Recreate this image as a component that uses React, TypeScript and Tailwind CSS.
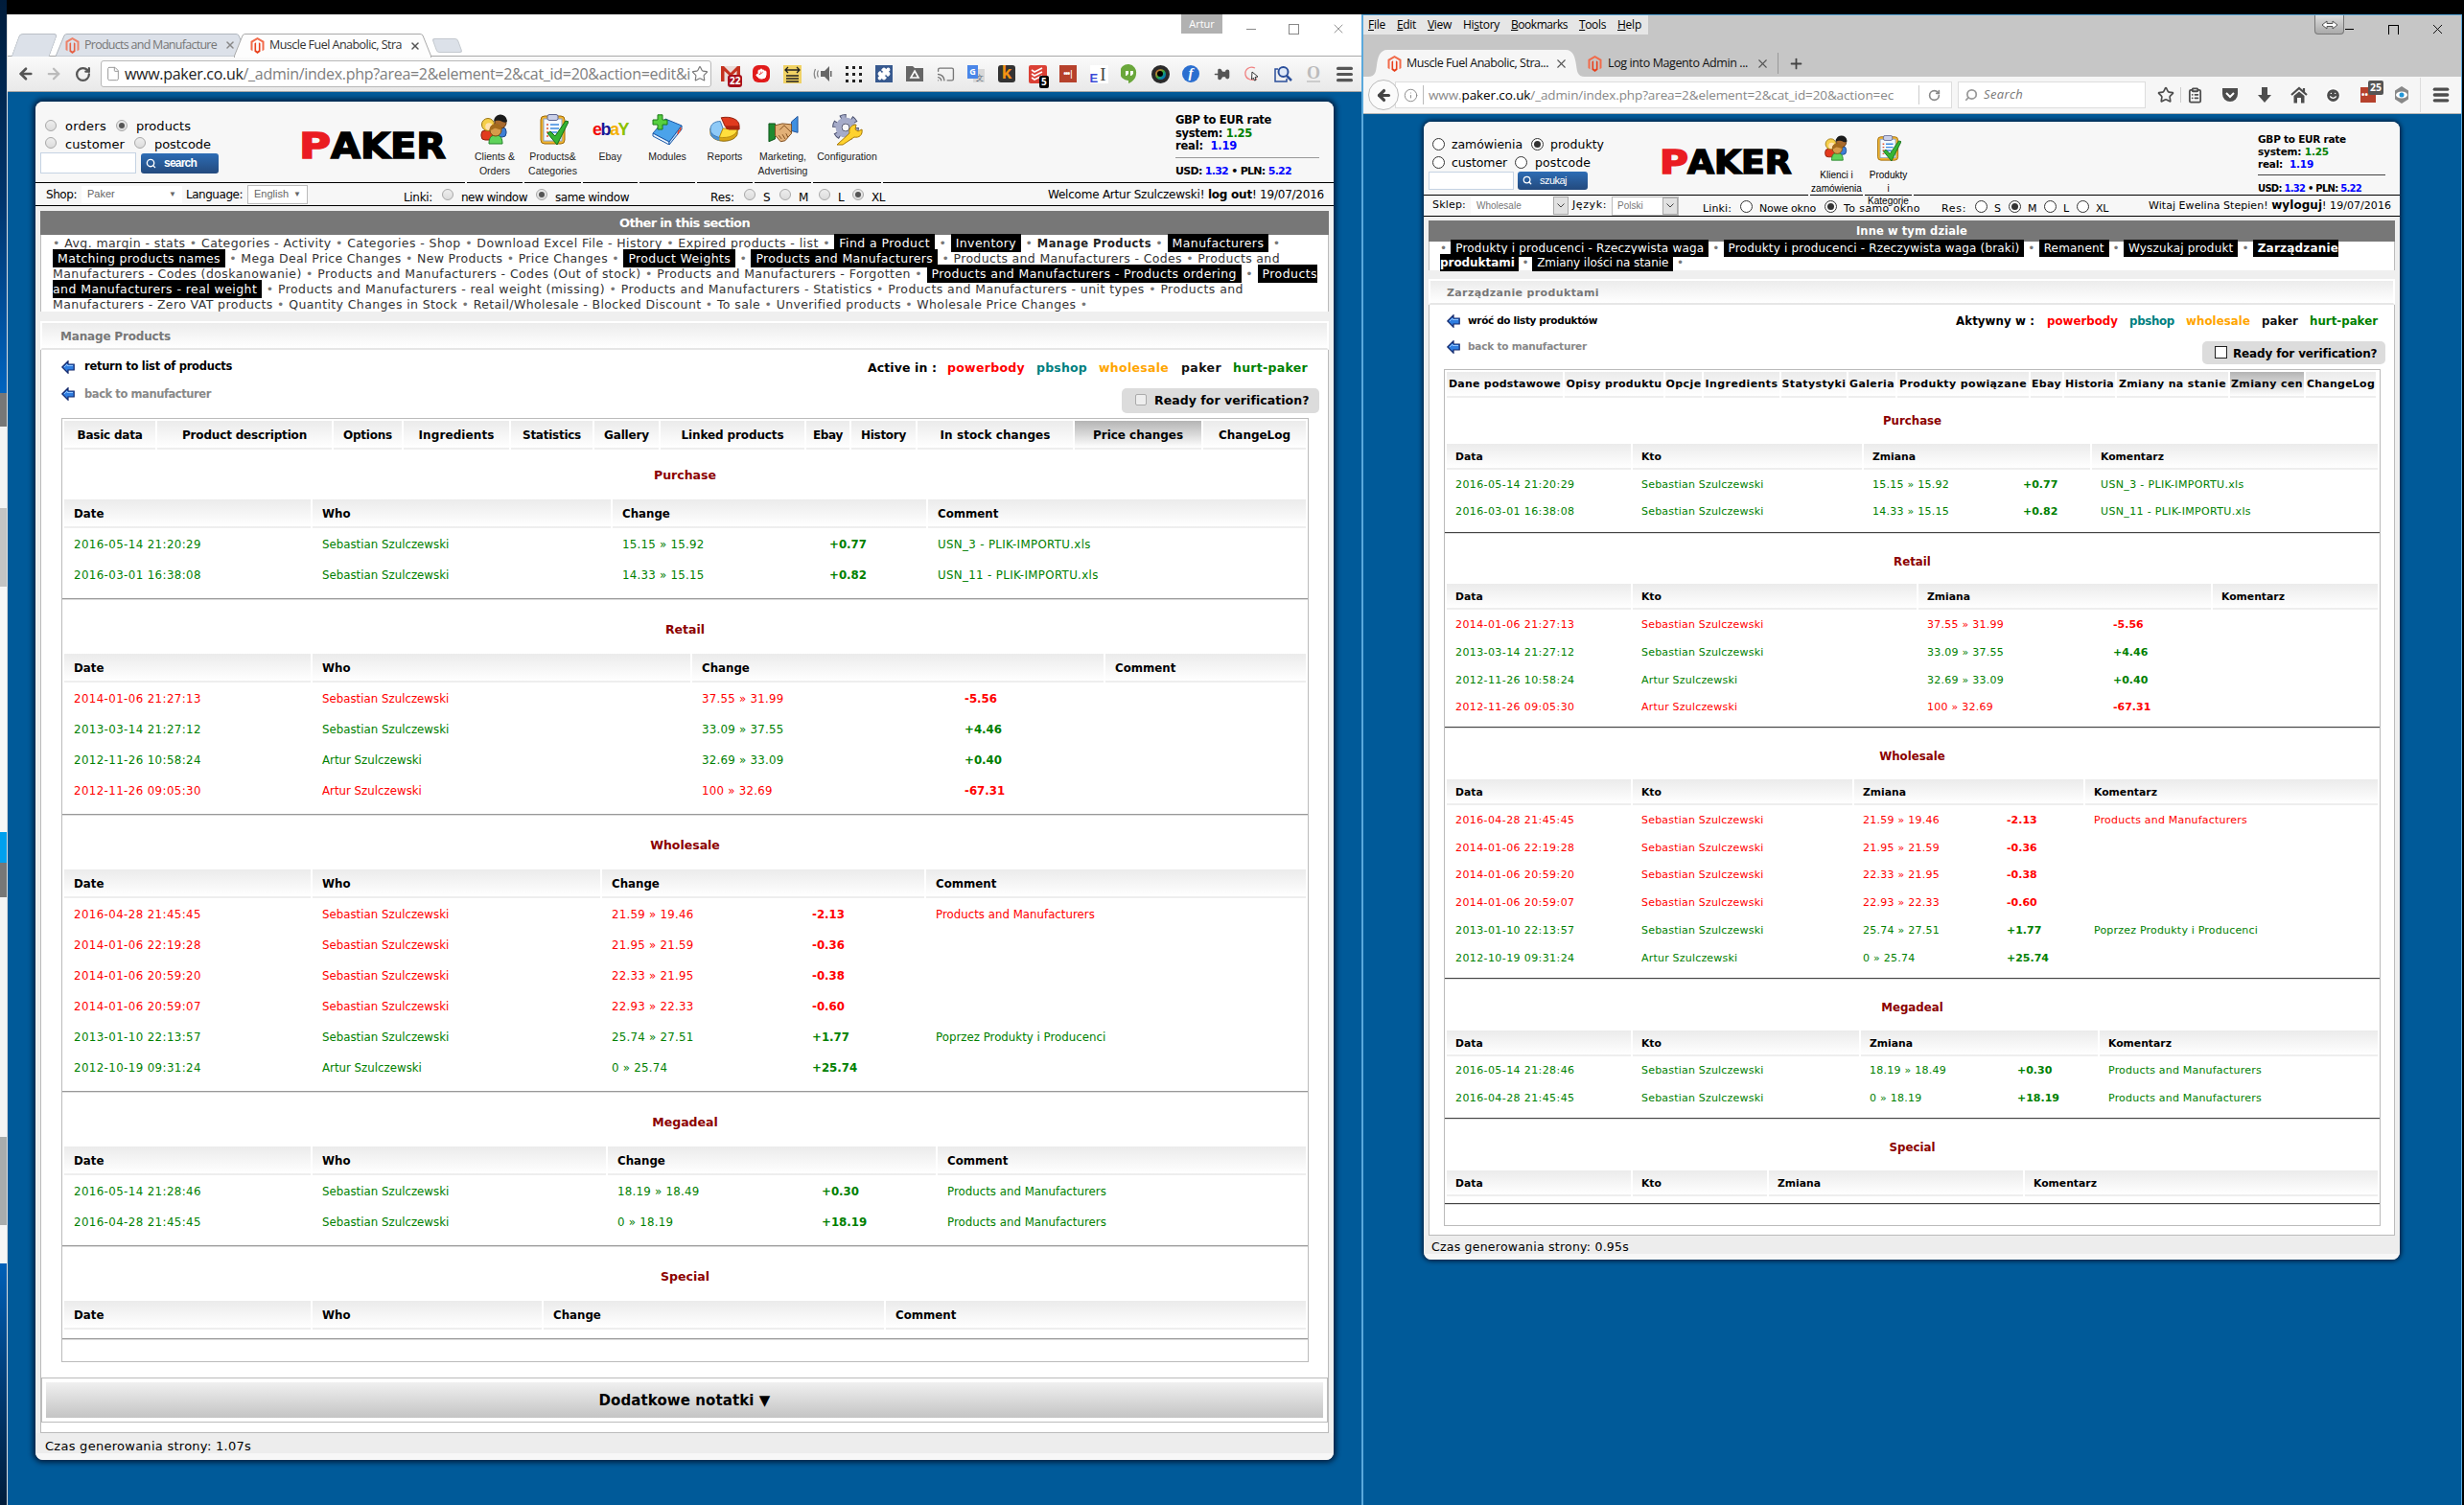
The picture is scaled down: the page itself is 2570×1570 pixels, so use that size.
import React, { useLayoutEffect, useRef } from "react";
import { Star, ArrowLeft, ArrowRight, RotateCw, X, Cast, Pin, Menu, ClipboardList, Home, Smile, Search, Puzzle, Hand, Plus, Info, ArrowDown, File } from "lucide-react";

type Kids = { className?: string; children?: React.ReactNode };

/* Text run spread evenly over the width of its box. */
function T({ className = "", children }: Kids) {
  const ref = useRef<HTMLSpanElement>(null);
  useLayoutEffect(() => {
    const el = ref.current;
    if (!el || !el.parentElement) return;
    el.style.letterSpacing = "0px";
    const target = el.parentElement.clientWidth;
    const natural = el.getBoundingClientRect().width;
    el.style.letterSpacing = (target - natural) / (el.textContent || " ").length + "px";
  });
  return (
    <span className={"inline-block shrink-0 whitespace-nowrap " + className}>
      <span ref={ref} className="inline-block">{children}</span>
    </span>
  );
}

/* ---------- small drawings ---------- */

function Magento({ className = "" }: { className?: string }) {
  return (
    <svg viewBox="0 0 14 17" className={"h-[17px] w-[15px] shrink-0 " + className}>
      <path d="M7 0 14 4v9l-2 1.2V5.2L7 2.3 2 5.2v9L0 13V4Z" fill="#f26b4a" />
      <path d="M4 6.2 5.6 5.3v8.2l1.4.9 1.4-.9V5.3L10 6.2v8.6L7 17l-3-2.2Z" fill="#e8401c" />
    </svg>
  );
}

function BlueArrow({ className = "" }: { className?: string }) {
  return (
    <svg viewBox="0 0 14 14" className={"h-[14px] w-[14px] shrink-0 " + className}>
      <path d="M.8 7 7 .8V4h6.2v6H7v3.2Z" fill="#2f7de0" stroke="#12276b" strokeWidth="1.2" />
      <path d="M3 7 6 4v1.5h6" fill="none" stroke="#8fc4ff" />
    </svg>
  );
}

function People() {
  return (
    <svg viewBox="0 0 32 32" className="h-full w-full">
      <rect x="2" y="17" width="12" height="10" rx="4" fill="#e23a1d" stroke="#8a1c0a" />
      <rect x="19" y="14" width="9" height="10" rx="4" fill="#3d7fd6" stroke="#1d4688" />
      <circle cx="9" cy="11" r="6.5" fill="#f5cf4a" stroke="#9a7410" />
      <circle cx="10" cy="13" r="3.8" fill="#ffe2b0" />
      <circle cx="22" cy="9" r="6" fill="#a96a2e" stroke="#5a340f" />
      <path d="M15 8a7 7 0 0 1 14-1c0 2-3 2-5 1s-6-2-9 0Z" fill="#1b1b1b" />
      <path d="M10 31c0-6 2-9 7-9s7 3 7 9Z" fill="#5fd35a" stroke="#23832a" />
      <circle cx="17" cy="17" r="6" fill="#d79b4a" stroke="#7c4c12" />
      <path d="M10.500 17a6.500 6.500 0 0 1 13-1c-3 1-6-2-8-1s-3 2-5 2Z" fill="#a46a1c" />
    </svg>
  );
}

function Clipboard() {
  return (
    <svg viewBox="0 0 32 32" className="h-full w-full">
      <rect x="3" y="2" width="25" height="29" rx="4" fill="#f2b42d" stroke="#9c6a0b" />
      <rect x="6" y="5" width="19" height="23" fill="#f4f9ff" stroke="#8aa2c8" />
      <rect x="10" y="0.500" width="11" height="6" rx="2" fill="#c9cfe8" stroke="#5c6490" />
      <path d="M13 11h9M13 15h9M13 19h7M13 23h5" stroke="#3d8be0" strokeWidth="1.700" />
      <path d="M9 11h2M9 15h2M9 19h2M9 23h2" stroke="#e2542d" strokeWidth="1.700" />
      <path d="m10 20 3-2 5 5L29 7l3 1-12 24Z" fill="#35b433" stroke="#136a17" />
    </svg>
  );
}

function EbayLogo() {
  return (
    <span className="flex h-full items-center justify-center font-['Liberation_Sans'] text-[18px] leading-none font-bold tracking-[-1.5px]">
      <span className="text-[#f20c0c]">e</span>
      <span className="text-[#1a1a9a]">b</span>
      <span className="text-[#f5b000]">a</span>
      <span className="text-[#8cc000]">Y</span>
    </span>
  );
}

function Book() {
  return (
    <svg viewBox="0 0 32 32" className="h-full w-full">
      <path d="m14 5 17 7-13 17L1 20Z" fill="#4ba3ea" stroke="#1c5aa8" />
      <path d="m1 20 17 9v3L1 23Z" fill="#e9f3ff" stroke="#1c5aa8" />
      <path d="m31 12v4L18 32v-3Z" fill="#bcd6f3" stroke="#1c5aa8" />
      <path d="m30 14-1 4M28 17l-1 4" stroke="#e4472a" strokeWidth="1.500" />
      <path d="M6 .8h5V6h5v5h-5v5H6v-5H1V6h5Z" fill="#56cf3f" stroke="#1d7b18" />
    </svg>
  );
}

function Pie() {
  return (
    <svg viewBox="0 0 34 28" className="h-[28px] w-[34px]">
      <path d="M1 13v5c0 5 7 9 15 9s15-4 15-9v-4Z" fill="#d8a513" stroke="#8c6a0d" />
      <path d="M1 13v5c0 4 4 7 10 8.500V18Z" fill="#4d92d4" />
      <path d="M15 13 11 23C4 21 1 18 1 14 1 8 6 5 12 5Z" fill="#8fcaf7" stroke="#3d79b5" />
      <path d="M15 13h16c0 6-7 10-15 10-2 0-4 0-5-.5Z" fill="#ffdf3d" stroke="#b58a10" />
      <path d="M17 10 13 1c11-2 20 2 20 9v4H21Z" fill="#e03a1e" stroke="#8e1d0a" />
      <path d="M17 10h16v4H19Z" fill="#a82410" />
    </svg>
  );
}

function Hands() {
  return (
    <svg viewBox="0 0 34 30" className="h-[31px] w-[34px]">
      <path d="M1 8h7v17l-7 3Z" fill="#1f8a30" stroke="#0c521a" />
      <path d="M33 0v18l-7-2V6Z" fill="#3f8fe0" stroke="#1d4f97" />
      <path d="M8 10 16 8l10 1v10l-7 8-5 1-6-7Z" fill="#e2b077" stroke="#7d4b1c" />
      <path d="m13 15 5-5 8 8M12 21l3 4M16 20l3 5M20 19l2 4" fill="none" stroke="#7d4b1c" />
    </svg>
  );
}

function GearWrench() {
  return (
    <svg viewBox="0 0 32 34" className="h-[34px] w-[32px]">
      <circle cx="14" cy="15" r="9.500" fill="none" stroke="#4d5270" strokeWidth="9" strokeDasharray="5.200 4.750" />
      <circle cx="14" cy="15" r="9.500" fill="none" stroke="#a5abc9" strokeWidth="7" strokeDasharray="3.600 6.350" strokeDashoffset="-0.8" />
      <circle cx="14" cy="15" r="7.500" fill="none" stroke="#a5abc9" strokeWidth="6" />
      <circle cx="14" cy="15" r="4" fill="#f7f7f7" stroke="#4d5270" />
      <path d="m5 33 13-12c-1-5 2-9 7-9l-1 5 3 2 4-2c1 6-3 9-8 8L11 33Z" fill="#ffd22e" stroke="#a87a08" />
    </svg>
  );
}

function Logo({ className, p }: { className: string; p: string }) {
  return (
    <div className={"flex leading-none font-black " + className}>
      <span className={"shrink-0 " + p}>
        <span className="inline-block origin-left scale-x-[1.22] text-[#ea1c22] [-webkit-text-stroke:1.5px_#ea1c22]">P</span>
      </span>
      <span className="inline-block origin-left scale-x-[1.080] text-black [-webkit-text-stroke:1.5px_#000]">AKER</span>
    </div>
  );
}

function Radio({ on, ff, className = "" }: { on?: boolean; ff?: boolean; className?: string }) {
  return ff ? (
    <span className={"flex h-[13px] w-[13px] shrink-0 items-center justify-center rounded-full border border-[#333] bg-white " + className}>
      {on && <span className="h-[7px] w-[7px] rounded-full bg-[#333]" />}
    </span>
  ) : (
    <span className={"flex h-3 w-3 shrink-0 items-center justify-center rounded-full border border-[#a8a8a8] bg-linear-to-b from-[#eee] to-[#dcdcdc] " + className}>
      {on && <span className="h-[6px] w-[6px] rounded-full bg-[#555]" />}
    </span>
  );
}

/* ---------- link strip ---------- */

const linkStyles: Record<string, string> = {
  "*": "bg-black px-[5px] py-[2px] text-white",
  "<": "bg-black py-[2px] pl-[5px] text-white",
  ">": "bg-black py-[2px] pr-[5px] text-white",
  "{": "bg-black py-[2px] pl-[5px] font-bold text-white",
  "}": "bg-black py-[2px] pr-[4px] font-bold text-white",
  "!": "font-bold text-[11.5px] text-[#222]",
};

function Links({ lines, className }: { lines: { w: string; parts: string[]; tail?: boolean; head?: boolean }[]; className: string }) {
  return (
    <div className={className}>
      {lines.map((l, i) => (
        <div key={i} className="flex">
          <T className={l.w}>
            {l.head && <span className="text-[#777]">• </span>}
            {l.parts.map((p, j) => {
              const style = linkStyles[p[0]];
              return (
                <span key={j}>
                  <span className={style || "text-[#333]"}>{style ? p.slice(1) : p}</span>
                  {(j < l.parts.length - 1 || l.tail) && <span className="text-[#777]"> • </span>}
                </span>
              );
            })}
          </T>
        </div>
      ))}
    </div>
  );
}

/* ---------- price tables ---------- */

type Row = [string, string, string, string, string?];
type Sec = { title: string; grid: string; rows: Row[] };
type Style = {
  head: string; row: string; cell: string; name: string; firstTitle: string; title: string; gap: string; hr: string; labels: string[];
};

const S = "Sebastian Szulczewski";
const A = "Artur Szulczewski";
const PM = "Products and Manufacturers";

const data: { title: string; rows: Row[] }[] = [
  { title: "Purchase", rows: [
    ["2016-05-14 21:20:29", S, "15.15 » 15.92", "+0.77", "USN_3 - PLIK-IMPORTU.xls"],
    ["2016-03-01 16:38:08", S, "14.33 » 15.15", "+0.82", "USN_11 - PLIK-IMPORTU.xls"] ] },
  { title: "Retail", rows: [
    ["2014-01-06 21:27:13", S, "37.55 » 31.99", "-5.56"],
    ["2013-03-14 21:27:12", S, "33.09 » 37.55", "+4.46"],
    ["2012-11-26 10:58:24", A, "32.69 » 33.09", "+0.40"],
    ["2012-11-26 09:05:30", A, "100 » 32.69", "-67.31"] ] },
  { title: "Wholesale", rows: [
    ["2016-04-28 21:45:45", S, "21.59 » 19.46", "-2.13", PM],
    ["2014-01-06 22:19:28", S, "21.95 » 21.59", "-0.36"],
    ["2014-01-06 20:59:20", S, "22.33 » 21.95", "-0.38"],
    ["2014-01-06 20:59:07", S, "22.93 » 22.33", "-0.60"],
    ["2013-01-10 22:13:57", S, "25.74 » 27.51", "+1.77", "Poprzez Produkty i Producenci"],
    ["2012-10-19 09:31:24", A, "0 » 25.74", "+25.74"] ] },
  { title: "Megadeal", rows: [
    ["2016-05-14 21:28:46", S, "18.19 » 18.49", "+0.30", PM],
    ["2016-04-28 21:45:45", S, "0 » 18.19", "+18.19", PM] ] },
  { title: "Special", rows: [] },
];

function Tables({ grids, st }: { grids: string[]; st: Style }) {
  const secs: Sec[] = data.map((d, i) => ({ ...d, grid: grids[i] }));
  return (
    <>
      {secs.map((s, i) => (
        <section key={s.title}>
          <h3 className={"flex items-center justify-center font-bold text-[#8b0000] " + (i ? st.title : st.firstTitle)}>{s.title}</h3>
          <div className={"grid gap-x-[2px] px-[2px] " + s.grid}>
            {st.labels.map((l, j) => (
              <div key={l} className={"flex items-center border-b-2 border-[#eee] bg-linear-to-b from-[#ebebeb] to-white pt-[3px] font-bold text-black " + st.head + (j === 2 ? " col-span-2" : "")}>{l}</div>
            ))}
          </div>
          {s.rows.map((r) => (
            <div key={r[0]} className={"grid items-center gap-x-[2px] px-[2px] pt-[3px] " + s.grid + " " + st.row + (r[3][0] === "-" ? " text-[#f00]" : " text-[#008000]")}>
              <span className={st.cell + " tracking-[0.4px]"}>{r[0]}</span>
              <span className={st.cell + " " + st.name}>{r[1]}</span>
              <span className={st.cell + " tracking-[0.25px]"}>{r[2]}</span>
              <span className={st.cell + " font-bold"}>{r[3]}</span>
              <span className={st.cell + (i === 0 ? " tracking-[0.35px]" : " " + st.name)}>{r[4]}</span>
            </div>
          ))}
          <div className={st.gap} />
          <div className={"h-[2px] border-t border-b border-b-[#ddd] " + st.hr} />
        </section>
      ))}
    </>
  );
}

function Tabs({ items, className, active }: { items: [string, string, string][]; className: string; active: number }) {
  return (
    <div className={"flex gap-[2px] px-[2px] font-bold text-black " + className}>
      {items.map(([t, box, w], i) => (
        <div key={t} className={"flex shrink-0 items-center justify-center border-b-2 border-[#eee] bg-linear-to-b to-white pt-[2px] " + box + (i === active ? " from-[#b4b4b4]" : " from-[#ebebeb]")}>
          <T className={w}>{t}</T>
        </div>
      ))}
    </div>
  );
}

/* ---------- Chrome window ---------- */

function ExtIcons() {
  const cell = "relative flex h-9 w-8 shrink-0 items-center justify-center";
  return (
    <div className="flex">
      <div className={cell}>
        <svg viewBox="0 0 20 16" className="h-4 w-5"><path d="M0 0h20v16H0Z" fill="#e9dcd8" /><path d="M0 0h3l7 7 7-7h3v16h-3.500V5L10 11 3.500 5v11H0Z" fill="#c5321f" /></svg>
        <span className="absolute top-[19px] left-[13px] rounded-[3px] bg-[#a80f1b] px-[2px] text-[10px] leading-[13px] font-bold text-white">22</span>
      </div>
      <div className={cell}><span className="flex h-[18px] w-[18px] items-center justify-center rounded-[6px] bg-[#e11b1b]"><Hand className="h-3 w-3 fill-white text-white" /></span></div>
      <div className={cell}>
        <svg viewBox="0 0 19 19" className="h-[19px] w-[19px]"><path d="M0 0h19v19H0Z" fill="#f0d264" /><path d="m5 2-3 3 3 3M14 2l3 3-3 3M2 5h15M3 11h13M3 14h13M3 17h13" stroke="#222" strokeWidth="1.300" fill="none" /></svg>
      </div>
      <div className={cell}>
        <svg viewBox="0 0 20 18" className="h-[18px] w-5"><path d="M8 6h4l5-5v16l-5-5H8ZM18 6h1.500v6H18Z" fill="#666" /><path d="M5.500 5.500q-2 3.500 0 7M2.500 4q-2.500 5 0 10" fill="none" stroke="#888" strokeWidth="1.300" /></svg>
      </div>
      <div className={cell}>
        <div className="grid grid-cols-3 gap-[4px]">{Array.from({ length: 9 }, (_, i) => <span key={i} className="h-[3px] w-[3px] bg-[#222]" />)}</div>
      </div>
      <div className={cell}><span className="flex h-[18px] w-[18px] items-center justify-center bg-[#37598f]"><Puzzle className="h-3.5 w-3.5 fill-white text-white" /></span></div>
      <div className={cell}>
        <svg viewBox="0 0 20 16" className="h-4 w-5"><path d="M1 0h7l2 2h9v14H1Z" fill="#666" /><path d="m10 5 4 7H6Z" fill="none" stroke="#fff" strokeWidth="1.600" /></svg>
      </div>
      <div className={cell}><Cast className="h-[19px] w-[19px] text-[#777]" strokeWidth={1.700} /></div>
      <div className={cell}>
        <span className="relative flex h-[18px] w-[18px]">
          <span className="mt-1 ml-1.5 flex h-[14px] w-3 items-end justify-end bg-[#d8d8d8] pr-px text-[8px] leading-[10px] text-[#567]">文</span>
          <span className="absolute top-0 left-0 h-[14px] w-[11px] bg-[#4a86e8] text-center text-[9px] leading-[13px] font-bold text-white">G</span>
        </span>
      </div>
      <div className={cell}><span className="h-[18px] w-[18px] rounded-[3px] bg-[#333] text-center text-[17px] leading-[16px] font-bold text-[#f59312]">k</span></div>
      <div className={cell}>
        <svg viewBox="0 0 19 19" className="h-[19px] w-[19px]"><rect width="19" height="19" rx="2" fill="#db4035" /><path d="m3 5 3 2 8-4M3 9l3 2 8-4M3 13l3 2 8-4" stroke="#fff" strokeWidth="1.600" fill="none" /></svg>
        <span className="absolute top-[20px] left-[18px] rounded-[2px] bg-black px-[2px] text-[10px] leading-[13px] font-bold text-white">5</span>
      </div>
      <div className={cell}><span className="flex h-[18px] w-[18px] items-center justify-center bg-[#b6412c] text-[8px] font-bold tracking-[-1px] text-white">•••|</span></div>
      <div className={cell}><span className="flex h-[19px] w-[19px] items-end bg-white font-['Liberation_Sans'] text-[13px] leading-[11px] font-bold text-[#3b4ad6]">E<span className="pb-px pl-[2px] font-['Liberation_Serif'] text-[19px] leading-[17px] font-normal text-[#444]">I</span></span></div>
      <div className={cell}>
        <svg viewBox="0 0 18 20" className="h-5 w-[18px]"><path d="M8 17A8.500 8.500 0 1 1 16 10c0 4-3 8-8 10Z" fill="#6aa73b" /><path d="M5 7h3v3l-2 2H5ZM10 7h3v3l-2 2h-1Z" fill="#fff" /></svg>
      </div>
      <div className={cell}><span className="flex h-[19px] w-[19px] items-center justify-center rounded-full border-4 border-[#2a2a2a] bg-linear-to-br from-[#e33] via-[#3a3] to-[#33e]"><span className="h-1.5 w-1.5 rounded-full bg-black" /></span></div>
      <div className={cell}><span className="h-[18px] w-[18px] rounded-full bg-[#2b6fd0] text-center font-['Liberation_Serif'] text-[15px] leading-[17px] font-bold text-white italic">f</span></div>
      <div className={cell}><Pin className="h-[17px] w-[17px] rotate-90 fill-[#555] text-[#555]" /></div>
      <div className={cell}>
        <svg viewBox="0 0 18 18" className="h-[18px] w-[18px]"><path d="M12 3C6 0 1 5 2 10s8 7 12 4" fill="none" stroke="#f08080" strokeWidth="1.300" /><path d="m9 7 6 5-3 .5 1 3-1.500.500-1.200-2.800L8.500 15Z" fill="#fff" stroke="#333" /></svg>
      </div>
      <div className={cell}>
        <svg viewBox="0 0 19 19" className="h-[19px] w-[19px]"><path d="M4 4H1v13h12v-3" fill="none" stroke="#2b4f9b" strokeWidth="1.500" /><circle cx="9.500" cy="7" r="5" fill="#dfe9f8" stroke="#2b4f9b" strokeWidth="2" /><path d="m13 11 5 5" stroke="#2b4f9b" strokeWidth="2.500" /></svg>
      </div>
      <div className={cell}><span className="border-b-2 border-[#ccc] font-['Liberation_Serif'] text-[18px] leading-[16px] font-bold text-[#bbb]">O</span></div>
      <div className={cell}><Menu className="h-[21px] w-[21px] text-[#555]" strokeWidth={3.500} /></div>
    </div>
  );
}

function ChromeTop() {
  return (
    <>
      <div className="flex h-[44px] border-b border-[#a9a9a9] bg-white font-['Open_Sans'] text-[12.5px]">
        <div className="mt-[20px] flex h-[24px] w-[52px] items-center pl-[8px]">
          <span className="h-full w-[40px] skew-x-[-20deg] rounded-t-[4px] border border-b-0 border-[#b9bfc6] bg-[#dce1e9]" />
        </div>
        <div className="relative mt-[20px] flex h-[24px] w-[190px] items-center text-[#777]">
          <svg viewBox="0 0 200 24" className="absolute top-0 left-[-2px] h-[24px] w-[200px]"><path d="M0 24 9 2q1-1.500 3-1.500h176q2 0 3 1.500l9 22Z" fill="#dce1e9" stroke="#b0b6bd" /></svg>
          <Magento className="relative ml-[8px] opacity-80" />
          <T className="relative ml-[5px] w-[138px]">Products and Manufacture</T>
          <X className="relative ml-[8px] h-3 w-3 text-[#888]" strokeWidth={3} />
        </div>
        <div className="relative mt-[20px] flex h-[25px] w-[192px] items-center text-[#333]">
          <svg viewBox="0 0 206 25" className="absolute top-0 left-[-6px] h-[25px] w-[206px]"><path d="M0 24.500 9 2q1-1.500 3-1.500h182q2 0 3 1.500l9 22.500Z" fill="#fdfdfd" stroke="#a9a9a9" /><path d="M1 24.500h204" stroke="#fdfdfd" /></svg>
          <Magento className="relative ml-[11px]" />
          <T className="relative ml-[5px] w-[138px]">Muscle Fuel Anabolic, Stra</T>
          <X className="relative ml-[8px] h-3 w-3 text-[#555]" strokeWidth={3} />
        </div>
        <span className="mt-[25px] ml-[11px] h-[15px] w-[27px] skew-x-[20deg] rounded-[3px] border border-[#c4c9cf] bg-[#dce1e9]" />
        <span className="ml-auto flex h-[20px] w-[43px] items-center justify-center bg-[#b1b1b1] text-[11px] text-white">Artur</span>
        <span className="mt-[15px] ml-[25px] h-px w-[10px] bg-[#888]" />
        <span className="mt-[10px] ml-[34px] h-[11px] w-[11px] border border-[#888]" />
        <X className="mt-[7px] mr-[16px] ml-[33px] h-4 w-4 text-[#888]" strokeWidth={1.300} />
      </div>
      <div className="flex h-[37px] items-center border-b border-[#a5a5a5] bg-linear-to-b from-[#fafafa] to-[#e9e9e9]">
        <ArrowLeft className="ml-[10px] h-[18px] w-[18px] text-[#555]" strokeWidth={3.500} />
        <ArrowRight className="ml-[11px] h-[18px] w-[18px] text-[#bbb]" strokeWidth={3} />
        <RotateCw className="ml-[13px] h-[17px] w-[17px] text-[#555]" strokeWidth={3.200} />
        <div className="ml-[10px] flex h-[28px] w-[637px] items-center rounded-[3px] border border-[#b8b8b8] bg-white">
          <File className="ml-[4px] h-[16px] w-[16px] text-[#999]" strokeWidth={1.500} />
          <T className="ml-[4px] w-[590px] font-['Open_Sans'] text-[16px] text-[#7e7e7e]"><span className="text-[#222]">www.paker.co.uk</span>/_admin/index.php?area=2&amp;element=2&amp;cat_id=20&amp;action=edit&amp;i</T>
          <Star className="ml-px h-[18px] w-[18px] text-[#777]" strokeWidth={1.500} />
        </div>
        <div className="ml-[4px]"><ExtIcons /></div>
      </div>
    </>
  );
}

const menuLeft: [string, string, React.ReactNode, string][] = [
  ["Clients &", "Orders", <People />, "w-[58px]"],
  ["Products&", "Categories", <Clipboard />, "w-[59px]"],
  ["Ebay", "", <EbayLogo />, "w-[57px]"],
  ["Modules", "", <Book />, "w-[58px]"],
  ["Reports", "", <Pie />, "w-[58px]"],
  ["Marketing,", "Advertising", <Hands />, "w-[59px]"],
  ["Configuration", "", <GearWrench />, "w-[71px]"],
];

function LeftPage() {
  return (
    <div className="flex-1 bg-[#005a99] pt-[10px] pl-[29px] font-['DejaVu_Sans'] text-[12px] text-black">
      <div className="flex h-[1417px] w-[1354px] flex-col overflow-hidden rounded-[8px] bg-[#efefef] shadow-[0_0_5px_3px_rgba(0,20,45,0.75)]">
        <header className="flex h-[85px] shrink-0 gap-[2px] bg-[#f7f7f7]">
          <div className="flex w-[448px] border-b border-black">
            <div className="w-[275px] pt-[16px] text-[13px]">
              <div className="flex h-[20px] items-center">
                <Radio className="mb-[3px] ml-[10px]" /><T className="ml-[9px] w-[43px]">orders</T>
                <Radio on className="mb-[3px] ml-[10px]" /><T className="ml-[9px] w-[57px]">products</T>
              </div>
              <div className="flex h-[17px] items-center">
                <Radio className="mb-[3px] ml-[10px]" /><T className="ml-[9px] w-[62px]">customer</T>
                <Radio className="mb-[3px] ml-[10px]" /><T className="ml-[9px] w-[59px]">postcode</T>
              </div>
              <div className="flex h-[22px] items-center pl-[5px]">
                <span className="h-[22px] w-[100px] border border-[#c5d3e3] bg-white" />
                <span className="ml-[5px] flex h-[21px] w-[81px] items-center rounded-[3px] bg-linear-to-b from-[#2d6db5] to-[#234a7e] text-white">
                  <Search className="ml-[5px] h-[11px] w-[11px]" strokeWidth={3} />
                  <T className="ml-[8px] w-[34px] font-['Liberation_Sans'] text-[12px] font-bold">search</T>
                </span>
              </div>
            </div>
            <Logo className="pt-[28px] text-[37px]" p="w-[33px]" />
          </div>
          {menuLeft.map(([a, b, icon, w]) => (
            <div key={a} className={"flex flex-col items-center border-b border-black pt-[13px] font-['Liberation_Sans'] text-[10.5px] leading-[15px] whitespace-nowrap text-[#222] " + w}>
              <div className="mb-[5px] flex h-[32px] w-[32px] items-center justify-center">{icon}</div>
              <span>{a}</span>
              <span>{b}</span>
            </div>
          ))}
          <div className="flex flex-1 justify-end border-b border-black pt-[13px] pr-[15px] text-[11.5px] leading-[13.5px] font-bold">
            <div className="w-[150px]">
              <div><T className="w-[100px]">GBP to EUR rate</T></div>
              <div><T className="w-[80px]">system: <span className="text-[#008000]">1.25</span></T></div>
              <div><T className="w-[64px]">real: &nbsp;<span className="text-[#00f]">1.19</span></T></div>
              <div className="mt-[4px] h-[2px] border-t border-[#999]" />
              <div className="mt-[6px] text-[11px]"><T className="w-[121px]">USD: <span className="text-[#00f]">1.32</span> • PLN: <span className="text-[#00f]">5.22</span></T></div>
            </div>
          </div>
        </header>
        <div className="flex h-[24px] shrink-0 items-center border-b border-black bg-[#f7f7f7] text-[12px]">
          <T className="ml-[11px] w-[32px]">Shop:</T>
          <span className="ml-[5px] flex h-[18px] w-[105px] items-center justify-between bg-white px-[6px] font-['Liberation_Sans'] text-[11px] text-[#666]">Paker<span className="text-[8px]">▼</span></span>
          <T className="ml-[4px] w-[59px]">Language:</T>
          <span className="ml-[5px] flex h-[20px] w-[63px] items-center justify-between border border-[#bbb] bg-white px-[6px] font-['Liberation_Sans'] text-[11px] text-[#666]">English<span className="text-[8px]">▼</span></span>
          <div className="flex items-center pt-[6px]">
            <T className="ml-[100px] w-[30px]">Linki:</T>
            <Radio className="mb-[6px] ml-[10px]" /><T className="ml-[8px] w-[69px]">new window</T>
            <Radio on className="mb-[6px] ml-[9px]" /><T className="ml-[8px] w-[77px]">same window</T>
            <T className="ml-[85px] w-[25px]">Res:</T>
            <Radio className="mb-[6px] ml-[10px]" /><T className="ml-[8px] w-[7px]">S</T>
            <Radio className="mb-[6px] ml-[10px]" /><T className="ml-[8px] w-[9px]">M</T>
            <Radio className="mb-[6px] ml-[12px]" /><T className="ml-[8px] w-[6px]">L</T>
            <Radio on className="mb-[6px] ml-[9px]" /><T className="ml-[8px] w-[14px]">XL</T>
          </div>
          <T className="mr-[10px] ml-auto w-[288px]">Welcome Artur Szulczewski! <b>log out</b>! 19/07/2016</T>
        </div>
        <div className="mx-[5px] mt-[5px] flex h-[25px] shrink-0 items-center justify-center bg-[#777] pt-px text-[13px] font-bold text-white"><T className="w-[136px]">Other in this section</T></div>
        <div className="mx-[5px] h-[80px] shrink-0 border-x border-[#bbb] bg-white pl-[12px]">
          <Links
            className="pt-px text-[12.5px] leading-[16px]"
            lines={[
              { w: "w-[1281px]", head: true, tail: true, parts: ["Avg. margin - stats", "Categories - Activity", "Categories - Shop", "Download Excel File - History", "Expired products - list", "*Find a Product", "*Inventory", "!Manage Products", "*Manufacturers"] },
              { w: "w-[1280px]", parts: ["*Matching products names", "Mega Deal Price Changes", "New Products", "Price Changes", "*Product Weights", "*Products and Manufacturers", "Products and Manufacturers - Codes", "Products and"] },
              { w: "w-[1319px]", parts: ["Manufacturers - Codes (doskanowanie)", "Products and Manufacturers - Codes (Out of stock)", "Products and Manufacturers - Forgotten", "*Products and Manufacturers - Products ordering", "<Products"] },
              { w: "w-[1242px]", parts: [">and Manufacturers - real weight", "Products and Manufacturers - real weight (missing)", "Products and Manufacturers - Statistics", "Products and Manufacturers - unit types", "Products and"] },
              { w: "w-[1080px]", tail: true, parts: ["Manufacturers - Zero VAT products", "Quantity Changes in Stock", "Retail/Wholesale - Blocked Discount", "To sale", "Unverified products", "Wholesale Price Changes"] },
            ]}
          />
        </div>
        <div className="mx-[5px] mt-[10px] flex h-[30px] shrink-0 items-center border-2 border-t-white border-r-white border-b-[#e6e6e6] border-l-white bg-linear-to-b from-[#ececec] to-white pt-px pl-[19px] font-bold text-[#777]"><T className="w-[115px]">Manage Products</T></div>
        <div className="mx-[5px] h-[1130px] shrink-0 border-x border-b border-[#bbb] bg-white">
          <div className="flex h-[35px] items-center pt-px pl-[21px]">
            <BlueArrow /><T className="ml-[10px] w-[154px] text-[11.5px] font-bold">return to list of products</T>
            <div className="mr-[21px] ml-auto flex pt-[2px] text-[12.5px] font-bold">
              <T className="w-[72px]">Active in :</T>
              <T className="ml-[11px] w-[81px] text-[#f00]">powerbody</T>
              <T className="ml-[12px] w-[53px] text-[#008080]">pbshop</T>
              <T className="ml-[12px] w-[73px] text-[#ffa500]">wholesale</T>
              <T className="ml-[13px] w-[42px] text-[#111]">paker</T>
              <T className="ml-[12px] w-[78px] text-[#008000]">hurt-paker</T>
            </div>
          </div>
          <div className="flex h-[36px] items-start pl-[21px]">
            <BlueArrow className="mt-[4px]" /><T className="mt-[3px] ml-[10px] w-[132px] text-[11.5px] font-bold text-[#888]">back to manufacturer</T>
            <div className="mt-[5px] mr-[9px] ml-auto flex h-[26px] w-[206px] items-center rounded-[5px] bg-[#dcdcdc] pt-px pl-[14px]">
              <span className="mb-[4px] h-[12px] w-[12px] rounded-[2px] border border-[#aaa] bg-[#eee]" />
              <T className="ml-[8px] w-[161px] text-[12.5px] font-bold">Ready for verification?</T>
            </div>
          </div>
          <div className="ml-[21px] h-[985px] w-[1301px] border border-[#bbb] pt-[2px]">
            <Tabs
              className="h-[30px] text-[12px]"
              active={10}
              items={[
                ["Basic data", "w-[95px]", "w-[68px]"], ["Product description", "w-[182px]", "w-[130px]"], ["Options", "w-[71px]", "w-[51px]"],
                ["Ingredients", "w-[110px]", "w-[79px]"], ["Statistics", "w-[85px]", "w-[61px]"], ["Gallery", "w-[67px]", "w-[47px]"],
                ["Linked products", "w-[150px]", "w-[107px]"], ["Ebay", "w-[45px]", "w-[31px]"], ["History", "w-[67px]", "w-[47px]"],
                ["In stock changes", "w-[162px]", "w-[115px]"], ["Price changes", "w-[132px]", "w-[94px]"], ["ChangeLog", "w-[107px]", "w-[75px]"],
              ]}
            />
            <Tables
              grids={[
                "grid-cols-[257px_311px_214px_111px_1fr]",
                "grid-cols-[257px_394px_272px_155px_1fr]",
                "grid-cols-[257px_300px_207px_127px_1fr]",
                "grid-cols-[257px_306px_211px_129px_1fr]",
                "grid-cols-[257px_239px_200px_153px_1fr]",
              ]}
              st={{
                labels: ["Date", "Who", "Change", "Comment"],
                head: "h-[30px] pl-[10px] text-[11.8px]", row: "h-[32px] text-[11.8px]", cell: "pl-[10px]", name: "tracking-normal",
                firstTitle: "h-[52px] pt-[2px] text-[12.5px]", title: "h-[56px] pt-[7px] text-[12.5px]", gap: "h-[9px]", hr: "border-t-[#999]",
              }}
            />
          </div>
          <div className="mt-[16px] h-[47px] border border-[#bbb] p-[4px]">
            <div className="flex h-full items-center justify-center bg-linear-to-b from-[#f0f0f0] to-[#c4c4c4] pt-px text-[15px] font-bold"><T className="w-[179px]">Dodatkowe notatki ▼</T></div>
          </div>
        </div>
        <div className="flex h-[21px] shrink-0 items-center bg-[#ededed] pt-[7px] pl-[10px]"><T className="w-[215px] text-[13px]">Czas generowania strony: 1.07s</T></div>
        <div className="flex-1 bg-[#f7f7f7]" />
      </div>
    </div>
  );
}

/* ---------- Firefox window ---------- */

function FirefoxTop() {
  const menu: [string, string, string, string][] = [
    ["", "F", "ile", "w-[18px]"], ["", "E", "dit", "w-[20px]"], ["", "V", "iew", "w-[25px]"], ["Hi", "s", "tory", "w-[38px]"],
    ["", "B", "ookmarks", "w-[59px]"], ["", "T", "ools", "w-[28px]"], ["", "H", "elp", "w-[25px]"],
  ];
  return (
    <>
      <div className="flex h-[20px] bg-[#c6c6c6] font-['Open_Sans'] text-[12px]">
        <div className="flex h-[20px] w-[297px] items-center gap-[12px] bg-[#e6e6e6] pl-[5px]">
          {menu.map(([a, b, c, w]) => <T key={b + c} className={w}>{a}<u>{b}</u>{c}</T>)}
        </div>
        <span className="ml-auto flex h-[20px] w-[31px] shrink-0 items-center justify-center rounded-b-[4px] border border-t-0 border-[#777] bg-linear-to-b from-[#ddd] to-[#aaa]">
          <svg viewBox="0 0 18 10" className="h-[10px] w-[18px]"><path d="m1 5 5-4v2.500h6V1l5 4-5 4V6.500H6V9Z" fill="#fff" stroke="#555" /></svg>
        </span>
        <span className="mt-[14px] ml-[1px] h-px w-[9px] shrink-0 bg-black" />
        <span className="mt-[10px] ml-[36px] h-[11px] w-[11px] shrink-0 border border-black" />
        <X className="mt-[6px] mr-[16px] ml-[32px] h-[17px] w-[17px] shrink-0 text-black" strokeWidth={1.300} />
      </div>
      <div className="flex h-[44px] items-end bg-[#c6c6c6] font-['Open_Sans'] text-[12.5px] text-[#111]">
        <div className="relative ml-[5px] flex h-[28px] w-[226px] items-center">
          <svg viewBox="0 0 226 28" className="absolute inset-0 h-[28px] w-[226px]"><path d="M0 28c8 0 8-6 9-12C10 8 12 0 20 0h186c8 0 10 8 11 16 1 6 1 12 9 12Z" fill="#f6f6f6" /></svg>
          <Magento className="relative ml-[20px]" />
          <T className="relative ml-[5px] w-[148px]">Muscle Fuel Anabolic, Stra...</T>
          <X className="relative ml-[6px] h-[15px] w-[15px] text-[#555]" strokeWidth={1.700} />
        </div>
        <div className="flex h-[28px] items-center">
          <Magento className="ml-[3px]" />
          <T className="ml-[6px] w-[146px]">Log into Magento Admin ...</T>
          <X className="ml-[8px] h-[15px] w-[15px] text-[#555]" strokeWidth={1.700} />
          <span className="ml-[8px] h-[22px] w-px bg-[#999]" />
          <Plus className="ml-[10px] h-[17px] w-[17px] text-[#444]" strokeWidth={2.500} />
        </div>
      </div>
      <div className="flex h-[39px] items-center border-b border-[#b5b5b5] bg-[#f6f6f6] text-[#4d4d4d]">
        <div className="z-10 ml-[5px] flex h-[32px] w-[32px] items-center justify-center rounded-full border border-[#bbb] bg-[#fbfbfb]">
          <ArrowLeft className="h-[17px] w-[17px] text-[#444]" strokeWidth={4.500} />
        </div>
        <div className="-ml-[4px] flex h-[28px] w-[581px] items-center border border-[#ddd] bg-white">
          <Info className="ml-[8px] h-[15px] w-[15px] text-[#888]" strokeWidth={1.500} />
          <span className="ml-[5px] h-[20px] w-px bg-[#bbb]" />
          <T className="ml-[5px] w-[485px] font-['Open_Sans'] text-[13.5px] text-[#888]">www.<span className="text-black">paker.co.uk</span>/_admin/index.php?area=2&amp;element=2&amp;cat_id=20&amp;action=ec</T>
          <span className="ml-[26px] h-[20px] w-px bg-[#ccc]" />
          <RotateCw className="ml-[9px] h-[13px] w-[13px] text-[#888]" strokeWidth={3} />
        </div>
        <div className="ml-[6px] flex h-[28px] w-[196px] items-center border border-[#ddd] bg-white">
          <Search className="ml-[6px] h-[14px] w-[14px] -scale-x-100 rotate-0 text-[#999]" strokeWidth={3} />
          <T className="ml-[6px] w-[41px] font-['Open_Sans'] text-[13px] text-[#777] italic">Search</T>
        </div>
        <Star className="ml-[12px] h-[18px] w-[18px]" strokeWidth={2.200} />
        <span className="ml-[6px] h-[16px] w-px bg-[#ccc]" />
        <ClipboardList className="ml-[6px] h-[17px] w-[17px]" strokeWidth={2.500} />
        <svg viewBox="0 0 18 16" className="ml-[19px] h-[16px] w-[18px]"><path d="M1 1h16v6a8 8 0 0 1-16 0Z" fill="#4d4d4d" /><path d="m5 6 4 4 4-4" fill="none" stroke="#fff" strokeWidth="2" /></svg>
        <svg viewBox="0 0 16 18" className="ml-[19px] h-[18px] w-[16px]"><path d="M5 1h6v8h4l-7 8-7-8h4Z" fill="#4d4d4d" /></svg>
        <svg viewBox="0 0 18 18" className="ml-[19px] h-[18px] w-[18px]"><path d="m1 9 8-7 8 7M14 2v4" fill="none" stroke="#4d4d4d" strokeWidth="2.200" /><path d="M3.500 10 9 5.500l5.500 4.500v7.500H11V12H7v5.500H3.500Z" fill="#4d4d4d" /></svg>
        <Smile className="ml-[18px] h-[17px] w-[17px] fill-[#4d4d4d] stroke-white" />
        <div className="relative ml-[20px] h-[16px] w-[16px] bg-[#b6412c] pl-px text-[9px] leading-[16px] font-bold text-white">••
          <span className="absolute -top-[7px] left-[8px] rounded-[2px] bg-[#555] px-[2px] font-['Open_Sans'] text-[10.5px] leading-[15px] font-bold text-white">25</span>
        </div>
        <svg viewBox="0 0 16 18" className="ml-[19px] h-[18px] w-[16px]"><path d="m8 0 7 4.500v9L8 18l-7-4.500v-9Z" fill="#888" /><ellipse cx="8" cy="9" rx="6" ry="3.500" fill="#fff" /><circle cx="8" cy="9" r="2.500" fill="#2196d8" /></svg>
        <span className="ml-[11px] h-[36px] w-px bg-[#ddd]" />
        <Menu className="ml-[11px] h-[20px] w-[20px]" strokeWidth={4} />
      </div>
    </>
  );
}

function SelectArrow() {
  return (
    <span className="ml-auto flex h-full w-[16px] items-center justify-center border border-[#aaa] bg-[#e1e1e1]">
      <svg viewBox="0 0 8 5" className="h-[5px] w-[8px]"><path d="m.5.5 3.500 3.500L7.500.5" fill="none" stroke="#444" /></svg>
    </span>
  );
}

function RightPage() {
  return (
    <div className="flex-1 bg-[#005a99] pt-[8px] pl-[63px] font-['DejaVu_Sans'] text-[11.4px] text-black">
      <div className="flex h-[1187px] w-[1018px] flex-col overflow-hidden rounded-[8px] bg-[#efefef] shadow-[0_0_4px_2px_rgba(0,20,45,0.75)]">
        <header className="flex h-[77px] shrink-0 gap-[2px] bg-[#f7f7f7]">
          <div className="flex w-[401px] border-b border-black">
            <div className="w-[246px] pt-[15px] text-[12.5px]">
              <div className="flex h-[19px] items-center">
                <Radio ff className="mb-[3px] ml-[9px]" /><T className="ml-[7px] w-[74px]">zamówienia</T>
                <Radio ff on className="mb-[3px] ml-[9px]" /><T className="ml-[7px] w-[56px]">produkty</T>
              </div>
              <div className="flex h-[19px] items-center">
                <Radio ff className="mb-[3px] ml-[9px]" /><T className="ml-[7px] w-[58px]">customer</T>
                <Radio ff className="mb-[3px] ml-[8px]" /><T className="ml-[8px] w-[58px]">postcode</T>
              </div>
              <div className="flex h-[16px] items-center pl-[5px]">
                <span className="h-[19px] w-[89px] border border-[#c5d3e3] bg-white" />
                <span className="ml-[4px] flex h-[19px] w-[73px] items-center rounded-[3px] bg-linear-to-b from-[#2d6db5] to-[#234a7e] text-white">
                  <Search className="ml-[5px] h-[10px] w-[10px]" strokeWidth={3} />
                  <T className="ml-[8px] w-[28px] font-['Liberation_Sans'] text-[11px]">szukaj</T>
                </span>
              </div>
            </div>
            <Logo className="pt-[26px] text-[33.5px]" p="w-[29px]" />
          </div>
          <div className="flex w-[55px] flex-col items-center border-b border-black pt-[14px] font-['Liberation_Sans'] text-[10px] leading-[13.6px] whitespace-nowrap">
            <div className="mb-[8px] h-[27px] w-[27px] shrink-0"><People /></div><span>Klienci i</span><span>zamówienia</span>
          </div>
          <div className="relative z-10 flex w-[49px] flex-col items-center border-b border-black pt-[14px] font-['Liberation_Sans'] text-[10px] leading-[13.6px] whitespace-nowrap">
            <div className="mb-[8px] h-[27px] w-[27px] shrink-0"><Clipboard /></div><span>Produkty</span><span>i</span><span>Kategorie</span>
          </div>
          <div className="flex flex-1 justify-end border-b border-black pt-[12px] pr-[15px] text-[10.5px] leading-[13px] font-bold">
            <div className="w-[133px]">
              <div><T className="w-[92px]">GBP to EUR rate</T></div>
              <div><T className="w-[74px]">system: <span className="text-[#008000]">1.25</span></T></div>
              <div><T className="w-[58px]">real: &nbsp;<span className="text-[#00f]">1.19</span></T></div>
              <div className="mt-[4px] h-[2px] border-t border-[#444]" />
              <div className="mt-[6px] text-[10px]"><T className="w-[108px]">USD: <span className="text-[#00f]">1.32</span> • PLN: <span className="text-[#00f]">5.22</span></T></div>
            </div>
          </div>
        </header>
        <div className="flex h-[22px] shrink-0 items-center border-b border-black bg-[#f7f7f7] text-[11px]">
          <T className="ml-[9px] w-[35px]">Sklep:</T>
          <span className="ml-[5px] flex h-[19px] w-[102px] items-center bg-white pl-[6px] font-['Liberation_Sans'] text-[10px] text-[#777]">Wholesale<SelectArrow /></span>
          <T className="ml-[4px] w-[36px]">Język:</T>
          <span className="ml-[5px] flex h-[20px] w-[70px] items-center border border-[#bbb] bg-white pl-[5px] font-['Liberation_Sans'] text-[10px] text-[#777]">Polski<SelectArrow /></span>
          <div className="flex items-center pt-[7px]">
            <T className="ml-[25px] w-[30px]">Linki:</T>
            <Radio ff className="mb-[6px] ml-[9px]" /><T className="ml-[7px] w-[59px]">Nowe okno</T>
            <Radio ff on className="mb-[6px] ml-[9px]" /><T className="ml-[7px] w-[80px]">To samo okno</T>
            <T className="ml-[22px] w-[26px]">Res:</T>
            <Radio ff className="mb-[6px] ml-[9px]" /><T className="ml-[7px] w-[7px]">S</T>
            <Radio ff on className="mb-[6px] ml-[8px]" /><T className="ml-[7px] w-[9px]">M</T>
            <Radio ff className="mb-[6px] ml-[8px]" /><T className="ml-[7px] w-[6px]">L</T>
            <Radio ff className="mb-[6px] ml-[8px]" /><T className="ml-[7px] w-[13px]">XL</T>
          </div>
          <T className="mr-[9px] ml-auto w-[253px]">Witaj Ewelina Stepien! <b className="text-[12px]">wyloguj</b>! 19/07/2016</T>
        </div>
        <div className="mx-[5px] mt-[4px] flex h-[22px] shrink-0 items-center justify-center bg-[#777] pt-px text-[11.5px] font-bold text-white"><T className="w-[116px]">Inne w tym dziale</T></div>
        <div className="mx-[5px] h-[30px] shrink-0 border-x border-[#bbb] bg-white pl-[11px]">
          <Links
            className="text-[12px] leading-[15px]"
            lines={[
              { w: "w-[937px]", head: true, parts: ["*Produkty i producenci - Rzeczywista waga", "*Produkty i producenci - Rzeczywista waga (braki)", "*Remanent", "*Wyszukaj produkt", "{Zarządzanie"] },
              { w: "w-[254px]", tail: true, parts: ["}produktami", "*Zmiany ilości na stanie"] },
            ]}
          />
        </div>
        <div className="mx-[5px] mt-[9px] flex h-[27px] shrink-0 items-center border-2 border-t-white border-r-white border-b-[#e6e6e6] border-l-white bg-linear-to-b from-[#ececec] to-white pt-[3px] pl-[17px] text-[11px] font-bold text-[#777]"><T className="w-[159px]">Zarządzanie produktami</T></div>
        <div className="mx-[5px] h-[971px] shrink-0 border-x border-b border-[#bbb] bg-white">
          <div className="flex h-[33px] items-center pl-[18px]">
            <BlueArrow /><T className="ml-[8px] w-[135px] text-[10.5px] font-bold">wróć do listy produktów</T>
            <div className="mr-[17px] ml-auto flex pt-[2px] text-[11.8px] font-bold">
              <T className="w-[82px]">Aktywny w :</T>
              <T className="ml-[13px] w-[74px] text-[#f00]">powerbody</T>
              <T className="ml-[12px] w-[47px] text-[#008080]">pbshop</T>
              <T className="ml-[12px] w-[67px] text-[#ffa500]">wholesale</T>
              <T className="ml-[12px] w-[38px] text-[#111]">paker</T>
              <T className="ml-[12px] w-[71px] text-[#008000]">hurt-paker</T>
            </div>
          </div>
          <div className="flex h-[34px] items-start pl-[18px]">
            <BlueArrow className="mt-[4px]" /><T className="mt-[3px] ml-[8px] w-[124px] text-[10.5px] font-bold text-[#888]">back to manufacturer</T>
            <div className="mt-[5px] mr-[9px] ml-auto flex h-[24px] w-[191px] items-center rounded-[5px] bg-[#dcdcdc] pt-px pl-[13px]">
              <span className="mb-[3px] h-[13px] w-[13px] border border-[#222] bg-white" />
              <T className="ml-[6px] w-[150px] text-[12px] font-bold">Ready for verification?</T>
            </div>
          </div>
          <div className="ml-[15px] h-[894px] w-[977px] border border-[#bbb] pt-[2px]">
            <Tabs
              className="h-[27px] text-[11px]"
              active={10}
              items={[
                ["Dane podstawowe", "w-[121px]", "w-[117px]"], ["Opisy produktu", "w-[103px]", "w-[100px]"], ["Opcje", "w-[38px]", "w-[37px]"],
                ["Ingredients", "w-[79px]", "w-[76px]"], ["Statystyki", "w-[68px]", "w-[67px]"], ["Galeria", "w-[49px]", "w-[47px]"],
                ["Produkty powiązane", "w-[137px]", "w-[133px]"], ["Ebay", "w-[33px]", "w-[31px]"], ["Historia", "w-[53px]", "w-[51px]"],
                ["Zmiany na stanie", "w-[116px]", "w-[112px]"], ["Zmiany cen", "w-[77px]", "w-[75px]"], ["ChangeLog", "w-[73px]", "w-[71px]"],
              ]}
            />
            <Tables
              grids={[
                "grid-cols-[192px_239px_155px_79px_1fr]",
                "grid-cols-[192px_296px_192px_111px_1fr]",
                "grid-cols-[192px_229px_148px_89px_1fr]",
                "grid-cols-[192px_236px_152px_93px_1fr]",
                "grid-cols-[192px_140px_130px_133px_1fr]",
              ]}
              st={{
                labels: ["Data", "Kto", "Zmiana", "Komentarz"],
                head: "h-[27px] pl-[9px] text-[10.8px]", row: "h-[28.8px] text-[11px]", cell: "pl-[9px]", name: "tracking-[0.2px]",
                firstTitle: "h-[48px] pt-[2px] text-[11.8px]", title: "h-[52.7px] pt-[7px] text-[11.8px]", gap: "h-[7px]", hr: "border-t-[#444]",
              }}
            />
          </div>
        </div>
        <div className="flex h-[19px] shrink-0 items-center bg-[#ededed] pt-[6px] pl-[8px]"><T className="w-[206px] text-[12.5px]">Czas generowania strony: 0.95s</T></div>
        <div className="flex-1 bg-[#f7f7f7]" />
      </div>
    </div>
  );
}

export default function App() {
  return (
    <div className="flex h-[1570px] w-[2570px] overflow-hidden bg-black">
      <div className="flex w-[7px] flex-col">
        <div className="h-[410px] bg-linear-to-b from-[#001c3b] via-[#00346b] to-[#0064c0]" />
        <div className="h-[35px] bg-[#777]" />
        <div className="h-[85px] bg-[#f4f4f4]" />
        <div className="h-[82px] bg-[#c4c4c4]" />
        <div className="h-[256px] bg-[#f7f7f7]" />
        <div className="h-[32px] bg-[#00a0ee]" />
        <div className="h-[36px] bg-[#777]" />
        <div className="h-[250px] bg-[#f4f4f4]" />
        <div className="h-[92px] bg-[#a9adad]" />
        <div className="h-[40px] bg-[#f6f6f6]" />
        <div className="flex-1 bg-linear-to-b from-[#0060b8] to-[#001c3b]" />
      </div>
      <div className="mt-[15px] flex w-[1413px] flex-col border-l border-[#ddd]">
        <ChromeTop />
        <LeftPage />
      </div>
      <div className="mt-[15px] flex w-[1148px] flex-col border-x border-t border-l-2 border-[#5aa9dc]">
        <FirefoxTop />
        <RightPage />
      </div>
    </div>
  );
}
